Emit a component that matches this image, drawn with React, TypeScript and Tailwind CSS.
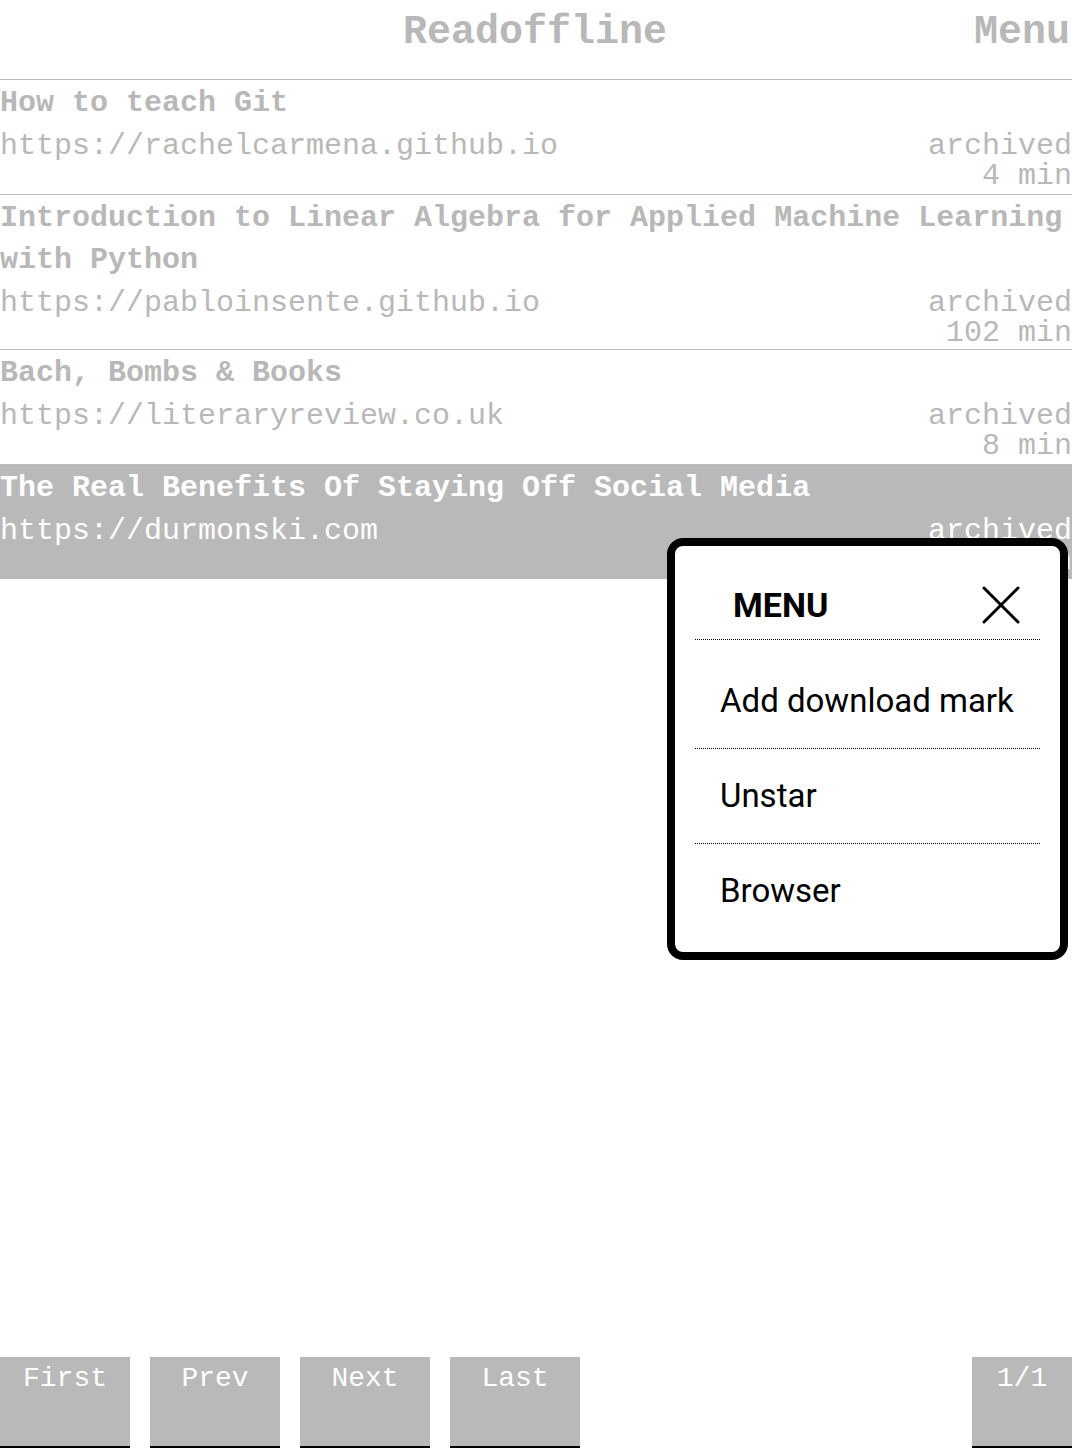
import React from "react";

const mono = { fontFamily: '"Liberation Mono", "DejaVu Sans Mono", monospace' };

type Item = { title: string; url: string; min: string; selected?: boolean; h: string };

const items: Item[] = [
  { title: "How to teach Git", url: "https://rachelcarmena.github.io", min: "4 min", h: "h-[115px]" },
  {
    title: "Introduction to Linear Algebra for Applied Machine Learning with Python",
    url: "https://pabloinsente.github.io",
    min: "102 min",
    h: "h-[155px]",
  },
  { title: "Bach, Bombs & Books", url: "https://literaryreview.co.uk", min: "8 min", h: "h-[115px]" },
  {
    title: "The Real Benefits Of Staying Off Social Media",
    url: "https://durmonski.com",
    min: "6 min",
    selected: true,
    h: "h-[114px]",
  },
];

function Row({ item }: { item: Item }) {
  const sel = item.selected;
  return (
    <div
      className={`${item.h} shrink-0 pt-[2px] ${
        sel ? "bg-[#b9b9b9] text-white" : "text-[#b8b8b8] border-b border-[#bdbdbd]"
      }`}
    >
      <div className="text-[30px] leading-[42px] font-bold">{item.title}</div>
      <div className="flex justify-between">
        <div className="text-[30px] leading-[44px]">{item.url}</div>
        <div className="flex flex-col items-end text-[30px] leading-[30px] pt-[7px]">
          <span>archived</span>
          <span>{item.min}</span>
        </div>
      </div>
    </div>
  );
}

function Btn({ label, w }: { label: string; w: string }) {
  return (
    <div
      className={`${w} h-[91px] bg-[#b9b9b9] border-b-2 border-black text-white text-[28px] leading-[44px] text-center`}
    >
      {label}
    </div>
  );
}

export default function App() {
  return (
    <div className="relative w-[1072px] h-[1448px] bg-white flex flex-col overflow-hidden" style={mono}>
      <div className="h-[80px] border-b border-[#bdbdbd] flex text-[#b8b8b8] text-[40px] font-bold leading-[66px] shrink-0">
        <div className="flex-1" />
        <div>Readoffline</div>
        <div className="flex-1 text-right pr-[2px]">Menu</div>
      </div>

      {items.map((it) => (
        <Row key={it.title} item={it} />
      ))}

      <div className="mt-auto flex justify-between">
        <div className="flex gap-[20px]">
          <Btn label="First" w="w-[130px]" />
          <Btn label="Prev" w="w-[130px]" />
          <Btn label="Next" w="w-[130px]" />
          <Btn label="Last" w="w-[130px]" />
        </div>
        <Btn label="1/1" w="w-[100px]" />
      </div>

      <div
        className="absolute left-[667px] top-[538px] w-[401px] h-[422px] bg-white border-[8px] border-black rounded-[16px] px-[20px]"
        style={{ fontFamily: 'Roboto, "Noto Sans", sans-serif' }}
      >
        <div className="pt-[24px] h-[94px] flex items-center justify-between border-b border-dotted border-black">
          <span className="pl-[38px] text-[34px] font-bold text-black leading-none">MENU</span>
          <svg width="38" height="38" viewBox="0 0 38 38" className="mr-[20px]">
            <path d="M2 2 L36 36 M36 2 L2 36" stroke="black" strokeWidth="3" strokeLinecap="round" />
          </svg>
        </div>
        <div className="mt-[14px] h-[95px] flex items-center pl-[25px] text-[33px] text-black border-b border-dotted border-black">
          Add download mark
        </div>
        <div className="h-[95px] flex items-center pl-[25px] text-[33px] text-black border-b border-dotted border-black">
          Unstar
        </div>
        <div className="h-[94px] flex items-center pl-[25px] text-[33px] text-black">Browser</div>
      </div>
    </div>
  );
}
